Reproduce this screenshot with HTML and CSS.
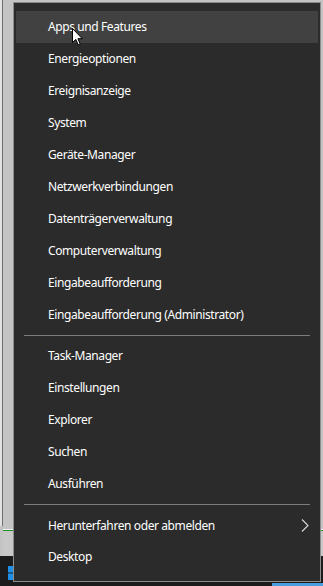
FILE: index.html
```html
<!DOCTYPE html>
<html>
<head>
<meta charset="utf-8">
<link rel="stylesheet" href="styles.css">
</head>
<body>
<div class="desktop">
  <div class="window">
    <div class="win-edge"></div>
    <div class="win-body">
      <div class="win-area"></div>
      <div class="win-status"></div>
    </div>
  </div>
  <div class="taskbar">
    <svg class="winlogo" width="6" height="14" viewBox="0 0 6 14"><rect x="0" y="0" width="6" height="6.5" fill="#1e8fe6"/><rect x="0" y="7.5" width="6" height="6.5" fill="#1e8fe6"/></svg>
    <div class="task-fill"></div>
    <div class="task-active"></div>
  </div>
</div>

<div class="menu">
  <div class="item hover">Apps und Features</div>
  <div class="item">Energieoptionen</div>
  <div class="item">Ereignisanzeige</div>
  <div class="item">System</div>
  <div class="item">Geräte-Manager</div>
  <div class="item">Netzwerkverbindungen</div>
  <div class="item">Datenträgerverwaltung</div>
  <div class="item">Computerverwaltung</div>
  <div class="item">Eingabeaufforderung</div>
  <div class="item">Eingabeaufforderung (Administrator)</div>
  <div class="sep"></div>
  <div class="item">Task-Manager</div>
  <div class="item">Einstellungen</div>
  <div class="item">Explorer</div>
  <div class="item">Suchen</div>
  <div class="item">Ausführen</div>
  <div class="sep"></div>
  <div class="item sub">Herunterfahren oder abmelden
    <svg class="chev" width="8" height="13" viewBox="0 0 8 13"><path d="M1 0.5 L7 6.5 L1 12.5" fill="none" stroke="#d8d8d8" stroke-width="1.1"/></svg>
  </div>
  <div class="item">Desktop</div>
</div>

<svg class="cursor" width="12" height="18" viewBox="0 0 12 18"><path d="M0.5 0.5 L0.5 14.5 L3.8 11.4 L6.2 16.8 L8.2 15.9 L5.9 10.7 L10.3 10.7 Z" fill="#ffffff" stroke="#000000" stroke-width="1"/></svg>
</body>
</html>
```
FILE: styles.css
```css
* { box-sizing: border-box; }
html, body {
  margin: 0;
  padding: 0;
  width: 323px;
  height: 586px;
  overflow: hidden;
}
body {
  position: relative;
  background: #c4c4c4;
  font-family: "Noto Sans", "Open Sans", sans-serif;
}
.desktop {
  display: flex;
  flex-direction: column;
  height: 586px;
}
.window {
  flex: 1;
  display: flex;
}
.win-edge {
  width: 3px;
  background: #e2e2e2;
  border-right: 1px solid #6e6e6e;
  margin-bottom: 30px;
}
.win-body {
  flex: 1;
  display: flex;
  flex-direction: column;
}
.win-area {
  flex: 1;
  background: #c4c4c4;
  border-bottom: 1px solid #f4f4f4;
}
.win-status {
  height: 26px;
  border-top: 1px solid #1f8f1f;
  background: #c8c8c8;
}
.taskbar {
  height: 30px;
  background: #1c1c1c;
  display: flex;
  align-items: center;
  padding-left: 8px;
}
.winlogo { display: block; margin-top: 4px; }
.task-fill { flex: 1; }
.task-active {
  align-self: flex-end;
  width: 51px;
  height: 3px;
  background: #4a9ee0;
}

.menu {
  position: absolute;
  left: 13px;
  top: 2px;
  width: 308px;
  height: 580px;
  background: #2b2b2b;
  border: 1px solid #8c8c8c;
  padding: 8px 2px 0 2px;
  display: flex;
  flex-direction: column;
}
.item {
  height: 32px;
  display: flex;
  align-items: center;
  padding-left: 32px;
  padding-bottom: 1px;
  color: #ffffff;
  font-size: 12px;
  letter-spacing: -0.4px;
  white-space: nowrap;
}
.item.hover { background: #414141; }
.item.sub { justify-content: space-between; padding-right: 9px; padding-bottom: 0; }
.chev { display: block; }
.sep {
  height: 1px;
  background: #7c7c7c;
  margin: 4px 8px 4px 8px;
  flex: none;
}
.cursor {
  position: absolute;
  left: 72px;
  top: 28px;
}
```
